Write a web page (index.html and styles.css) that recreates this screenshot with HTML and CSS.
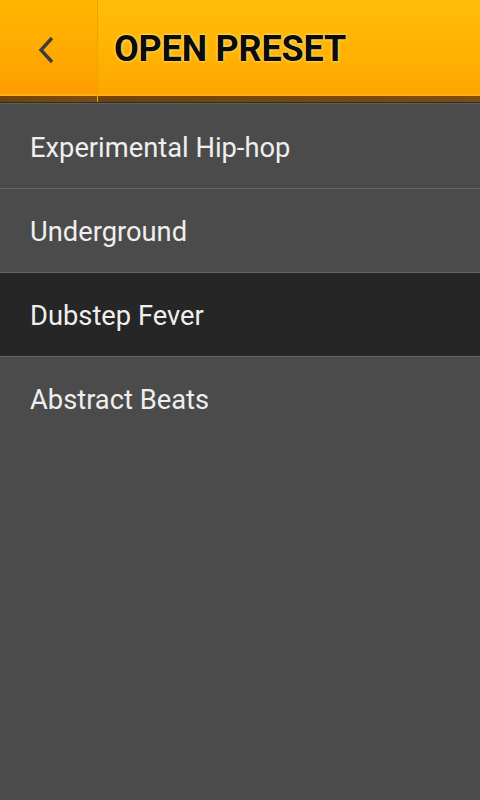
FILE: index.html
```html
<!DOCTYPE html>
<html>
<head>
<meta charset="utf-8">
<link rel="stylesheet" href="styles.css">
</head>
<body>
<div class="app">
  <header class="bar">
    <div class="col col-back">
      <div class="face back">
        <svg width="20" height="30" viewBox="0 0 20 30"><path d="M15 3 L4 15 L15 27" fill="none" stroke="#3d3d3d" stroke-width="3.4" stroke-linejoin="miter"/></svg>
      </div>
      <div class="edge"></div>
      <div class="shade"></div>
    </div>
    <div class="sep"></div>
    <div class="col col-main">
      <div class="face main">
        <h1 class="title">OPEN PRESET</h1>
      </div>
      <div class="edge"></div>
      <div class="shade"></div>
    </div>
  </header>
  <div class="rule"></div>
  <ul class="list">
    <li class="item">Experimental Hip-hop</li>
    <li class="item">Underground</li>
    <li class="item selected">Dubstep Fever</li>
    <li class="item">Abstract Beats</li>
  </ul>
</div>
</body>
</html>
```
FILE: styles.css
```css
html, body {
  margin: 0;
  padding: 0;
  background: #4b4b4b;
}
.app {
  width: 480px;
  height: 800px;
  background: #4b4b4b;
  font-family: Roboto, "Noto Sans", sans-serif;
  overflow: hidden;
}
.bar {
  display: flex;
  height: 102px;
}
.col {
  display: flex;
  flex-direction: column;
}
.col-back {
  width: 97px;
}
.col-main {
  flex: 1;
}
.face {
  height: 94px;
  display: flex;
  align-items: center;
}
.back {
  justify-content: center;
  background: linear-gradient(to bottom, #ffb500 0%, #ffa900 60%, #fd9d00 100%);
}
.main {
  background: linear-gradient(to bottom, #ffbd08 0%, #ffb300 55%, #ffa500 100%);
}
.back svg {
  margin-right: 3px;
  margin-top: 6px;
}
.sep {
  width: 1px;
  background: #e6a800;
  box-shadow: 1px 0 0 #ffc933;
}
.title {
  margin: 0 0 0 16px;
  font-size: 36px;
  font-weight: 700;
  color: #0e0c08;
  letter-spacing: -0.2px;
  text-shadow: 0 0 3px #fff2b0, 0 0 1px #fff2b0;
  line-height: 1;
  padding-top: 3px;
}
.edge {
  height: 2px;
  background: #ffae1c;
}
.shade {
  flex: 1;
  background: linear-gradient(to right, #6f4308, #7b4e0c);
}
.rule {
  height: 1px;
  background: #2c2c2c;
  border-bottom: 1px solid #5e5e5e;
}
.list {
  list-style: none;
  margin: 1px 0 0 0;
  padding: 0;
}
.item {
  border-bottom: 1px solid #636363;
  display: flex;
  align-items: center;
  padding-left: 30px;
  padding-top: 2px;
  box-sizing: border-box;
  height: 84px;
  font-size: 27.3px;
  color: #efefef;
}
.item.selected {
  background: #262626;
}
.item:last-child {
  border-bottom: none;
}
```
